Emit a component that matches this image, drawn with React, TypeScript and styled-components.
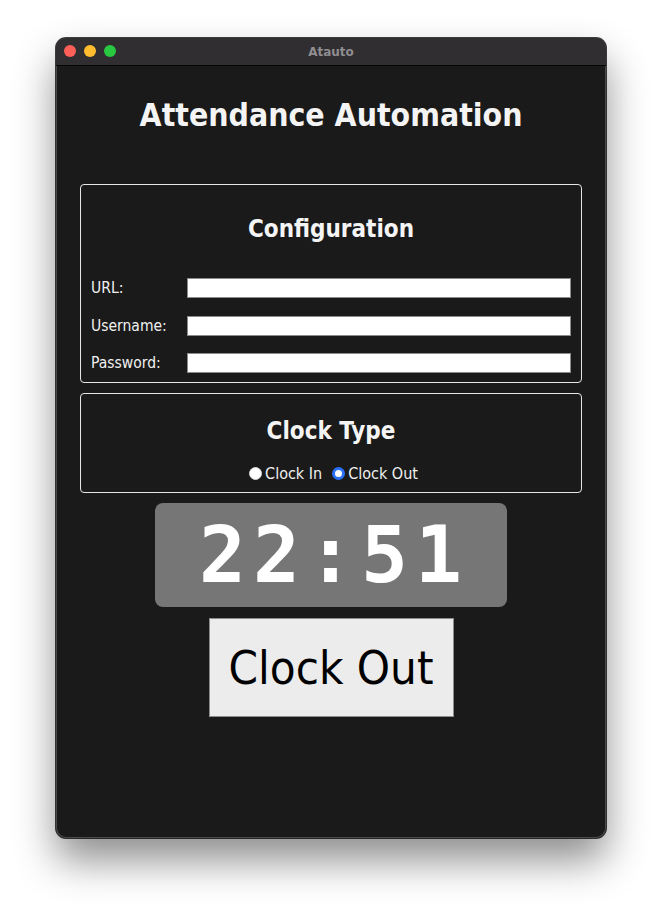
import React, { useState } from 'react';
import styled, { createGlobalStyle } from 'styled-components';

const FONT = '"DejaVu Sans Condensed", "DejaVu Sans", Verdana, sans-serif';

const GlobalStyle = createGlobalStyle`
  html, body {
    margin: 0;
    padding: 0;
    background: #ffffff;
  }
  body {
    font-family: ${FONT};
  }
`;

const Stage = styled.div`
  display: flex;
  justify-content: center;
  padding-top: 38px;
  height: 912px;
  box-sizing: border-box;
`;

const Window = styled.div`
  width: 550px;
  height: 800px;
  display: flex;
  flex-direction: column;
  border-radius: 10px;
  overflow: hidden;
  background: #1a1a1a;
  box-shadow: 0 0 0 1px rgba(0, 0, 0, 0.75), inset 0 0 0 1px #4a4a4a,
    0 22px 40px rgba(0, 0, 0, 0.45);
`;

const TitleBar = styled.div`
  position: relative;
  height: 28px;
  flex: 0 0 28px;
  display: flex;
  align-items: center;
  justify-content: center;
  background: #302e31;
  border-bottom: 1px solid #050505;
  box-sizing: border-box;
`;

const Lights = styled.div`
  position: absolute;
  left: 8px;
  top: 7px;
  display: flex;
  gap: 8px;
`;

const Light = styled.span<{ $color: string }>`
  width: 12px;
  height: 12px;
  border-radius: 50%;
  background: ${(p) => p.$color};
`;

const WindowTitle = styled.span`
  font-family: "DejaVu Sans", sans-serif;
  font-size: 12px;
  font-weight: 700;
  color: #8f8d90;
`;

const Content = styled.div`
  flex: 1;
  display: flex;
  flex-direction: column;
  align-items: center;
  padding: 0 24px;
  color: #f2f2f2;
`;

const Heading = styled.h1`
  margin: 29px 0 49px;
  font-size: 31.7px;
  line-height: 40px;
  font-weight: 700;
  color: #f4f4f4;
`;

const Panel = styled.section`
  width: 100%;
  box-sizing: border-box;
  border: 1px solid #e6e6e6;
  border-radius: 4px;
  padding: 0 10px 9px;
  margin-bottom: 10px;
  display: flex;
  flex-direction: column;
  align-items: center;
`;

const PanelTitle = styled.h2<{ $top: number; $gap: number }>`
  margin: 0 0 ${(p) => p.$gap}px;
  padding-top: ${(p) => p.$top}px;
  font-size: 24px;
  line-height: 28px;
  font-weight: 700;
  color: #f4f4f4;
`;

const Fields = styled.div`
  width: 100%;
  display: grid;
  grid-template-columns: 96px 1fr;
  row-gap: 17.5px;
  align-items: center;
`;

const Label = styled.label`
  font-size: 15.5px;
  line-height: 20px;
  color: #f0f0f0;
`;

const TextInput = styled.input`
  height: 20px;
  box-sizing: border-box;
  border: 1px solid #8a8a8a;
  background: #ffffff;
  outline: none;
  padding: 0 4px;
  font-family: ${FONT};
`;

const RadioRow = styled.div`
  display: flex;
  align-items: center;
  gap: 10px;
  padding-left: 5px;
  font-size: 16px;
  line-height: 19px;
`;

const RadioLabel = styled.label`
  display: flex;
  align-items: center;
  gap: 3px;
  color: #f0f0f0;
  cursor: pointer;
`;

const Radio = styled.input`
  appearance: none;
  margin: 0;
  width: 13px;
  height: 13px;
  border-radius: 50%;
  background: #ffffff;
  box-sizing: border-box;
  border: 1px solid #d8d8d8;
  &:checked {
    border: 3px solid #2a6ff5;
  }
`;

const ClockFace = styled.div`
  width: 352px;
  height: 104px;
  box-sizing: border-box;
  padding-left: 6px;
  display: flex;
  align-items: center;
  justify-content: center;
  background: #767676;
  border-radius: 8px;
  font-family: "DejaVu Sans Mono", "Liberation Mono", monospace;
  font-weight: 700;
  font-size: 78px;
  letter-spacing: 7px;
  color: #ffffff;
`;

const ActionButton = styled.button`
  margin-top: 11px;
  width: 245px;
  height: 99px;
  background: #ececec;
  border: 1px solid #8c8c8c;
  border-radius: 0;
  font-family: ${FONT};
  font-size: 47px;
  color: #000000;
  cursor: pointer;
`;

export default function App() {
  const [clockType, setClockType] = useState<'in' | 'out'>('out');

  return (
    <>
      <GlobalStyle />
      <Stage>
        <Window>
          <TitleBar>
            <Lights>
              <Light $color="#fe5f57" />
              <Light $color="#febc2e" />
              <Light $color="#28c840" />
            </Lights>
            <WindowTitle>Atauto</WindowTitle>
          </TitleBar>
          <Content>
            <Heading>Attendance Automation</Heading>
            <Panel>
              <PanelTitle $top={30} $gap={35}>Configuration</PanelTitle>
              <Fields>
                <Label>URL:</Label>
                <TextInput type="text" />
                <Label>Username:</Label>
                <TextInput type="text" />
                <Label>Password:</Label>
                <TextInput type="password" />
              </Fields>
            </Panel>
            <Panel>
              <PanelTitle $top={23} $gap={19}>Clock Type</PanelTitle>
              <RadioRow>
                <RadioLabel>
                  <Radio
                    type="radio"
                    name="clock"
                    checked={clockType === 'in'}
                    onChange={() => setClockType('in')}
                  />
                  Clock In
                </RadioLabel>
                <RadioLabel>
                  <Radio
                    type="radio"
                    name="clock"
                    checked={clockType === 'out'}
                    onChange={() => setClockType('out')}
                  />
                  Clock Out
                </RadioLabel>
              </RadioRow>
            </Panel>
            <ClockFace>22:51</ClockFace>
            <ActionButton>{clockType === 'in' ? 'Clock In' : 'Clock Out'}</ActionButton>
          </Content>
        </Window>
      </Stage>
    </>
  );
}
